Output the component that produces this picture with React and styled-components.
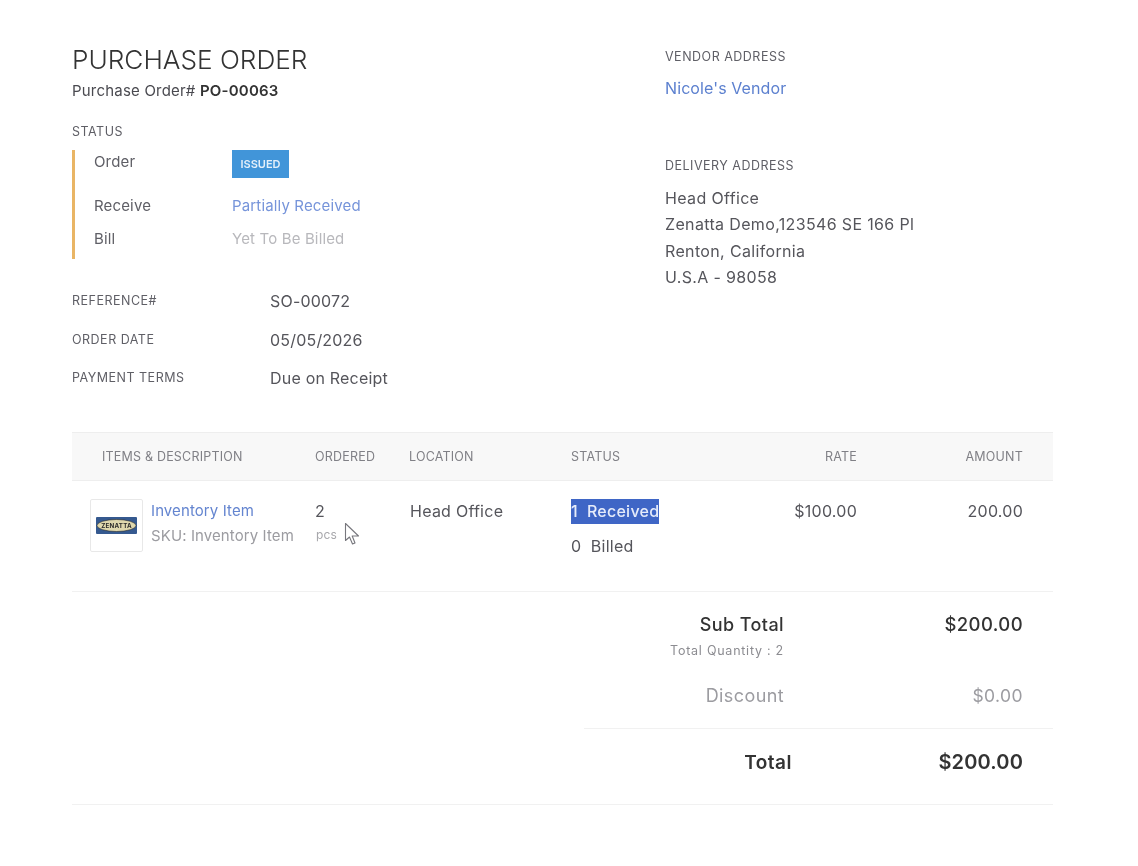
import React from 'react';
import styled, { createGlobalStyle } from 'styled-components';

const GlobalStyle = createGlobalStyle`
	html, body {
		margin: 0;
		padding: 0;
		background: #fff;
	}
	body {
		font-family: Inter, "Liberation Sans", sans-serif;
		color: #3a3a3f;
	}
`;

const Page = styled.div`
	width: 1138px;
	height: 866px;
	box-sizing: border-box;
	padding: 45px 85px 0 72px;
	overflow: hidden;
	filter: blur(0.35px);
`;

const Header = styled.div`
	display: flex;
	height: 387px;
`;

const LeftColumn = styled.div`
	width: 593px;
`;

const RightColumn = styled.div`
	padding-top: 5px;
`;

const Title = styled.div`
	font-size: 26.2px;
	line-height: 30px;
	font-weight: 300;
	color: #333;
`;

const PoNumber = styled.div`
	font-size: 15px;
	line-height: 16px;
	letter-spacing: 0.2px;
	margin-top: 8px;
	color: #4a4a50;
	b {
		font-weight: 600;
		color: #333;
	}
`;

const SmallLabel = styled.div`
	font-size: 12.5px;
	line-height: 14px;
	letter-spacing: 0.5px;
	color: #5f5f66;
	text-transform: uppercase;
`;

const StatusLabel = styled(SmallLabel)`
	margin-top: 26px;
`;

const StatusBox = styled.div`
	margin-top: 11px;
	border-left: 3px solid #e9b565;
	height: 109px;
	padding-left: 19px;
	box-sizing: border-box;
	display: grid;
	grid-template-columns: 138px 1fr;
	grid-template-rows: 34px 44px 22px;
	font-size: 15px;
	letter-spacing: 0.15px;
	align-items: center;
	color: #5f5f66;
`;

const StatusKey = styled.div`
	align-self: ${(p) => p.$align || 'center'};
	line-height: 24px;
`;

const BadgeCell = styled.div`
	align-self: start;
`;

const Badge = styled.span`
	display: block;
	width: 57px;
	height: 28px;
	line-height: 28px;
	background: #4195d9;
	color: #e4f0fa;
	font-size: 11px;
	letter-spacing: 0;
	font-weight: 600;
	text-align: center;
`;

const StatusValue = styled.div`
	color: ${(p) => p.$color};
	line-height: 24px;
`;

const MetaRows = styled.div`
	margin-top: 23px;
`;

const MetaRow = styled.div`
	display: flex;
	align-items: center;
	height: 38.5px;
`;

const MetaKey = styled(SmallLabel)`
	width: 198px;
`;

const MetaValue = styled.div`
	font-size: 16px;
	letter-spacing: 0.2px;
	color: #55555b;
`;

const VendorLink = styled.div`
	margin-top: 12px;
	font-size: 16px;
	line-height: 24px;
	letter-spacing: 0.1px;
	color: #5c80cf;
`;

const DeliveryLabel = styled(SmallLabel)`
	margin-top: 59px;
`;

const AddressLines = styled.div`
	margin-top: 12px;
	font-size: 16px;
	line-height: 26.4px;
	letter-spacing: 0.35px;
	color: #55555b;
`;

const TableHead = styled.div`
	display: grid;
	grid-template-columns: 243px 94px 162px 1fr 120px 166px;
	align-items: center;
	height: 47px;
	background: #f8f8f8;
	border-top: 1px solid #eee;
	border-bottom: 1px solid #eee;
	padding-right: 30px;
	font-size: 12.5px;
	letter-spacing: 0.2px;
	color: #808086;
	text-transform: uppercase;
`;

const HeadCell = styled.div`
	text-align: ${(p) => (p.$right ? 'right' : 'left')};
	padding-left: ${(p) => (p.$first ? '30px' : '0')};
`;

const ItemRow = styled.div`
	display: grid;
	grid-template-columns: 243px 95px 161px 1fr 120px 166px;
	height: 110px;
	padding-right: 30px;
	border-bottom: 1px solid #f1f1f1;
	font-size: 16px;
	letter-spacing: 0.25px;
	color: #55555b;
`;

const ItemCell = styled.div`
	padding-top: 18px;
	text-align: ${(p) => (p.$right ? 'right' : 'left')};
	line-height: 24px;
`;

const ItemInfo = styled.div`
	display: flex;
	gap: 8px;
	padding: 18px 0 0 18px;
`;

const Thumb = styled.div`
	width: 51px;
	height: 51px;
	border: 1px solid #e8e8e8;
	border-radius: 2px;
	display: flex;
	align-items: center;
	justify-content: center;
	flex-shrink: 0;
`;

const ItemText = styled.div`
	white-space: nowrap;
	font-size: 15px;
	line-height: 25px;
	letter-spacing: 0.1px;
	margin-top: -1px;
`;

const ItemName = styled.div`
	color: #6485d0;
`;

const ItemSku = styled.div`
	color: #9c9ca1;
`;

const Unit = styled.div`
	display: flex;
	align-items: center;
	padding-left: 1px;
	font-size: 12px;
	letter-spacing: 0.2px;
	color: #a8a8ac;
	height: 24px;
	position: relative;
`;

const Cursor = styled.svg`
	position: absolute;
	left: 29px;
	top: -1px;
`;

const Selected = styled.div`
	width: 88px;
	height: 25px;
	line-height: 25px;
	background: #3f66c6;
	color: #e6ecfa;
	font-weight: 500;
	overflow: hidden;
	white-space: nowrap;
`;

const BilledLine = styled.div`
	margin-top: 10px;
	white-space: nowrap;
`;

const TotalsWrap = styled.div`
	border-bottom: 1px solid #f1f1f1;
	height: 212px;
`;

const Totals = styled.div`
	margin-left: 512px;
	border-bottom: 1px solid #f1f1f1;
`;

const TotalsRow = styled.div`
	display: flex;
	justify-content: flex-end;
	align-items: center;
	box-sizing: border-box;
	padding: ${(p) => p.$pad} 30px 0 0;
	height: ${(p) => p.$height};
	font-size: 18px;
	letter-spacing: 0.4px;
	font-weight: ${(p) => p.$weight || 400};
	color: ${(p) => p.$color || '#333'};
`;

const TotalsKey = styled.div`
	width: 200px;
	text-align: right;
`;

const TotalsValue = styled.div`
	width: 239px;
	text-align: right;
	font-size: ${(p) => p.$size || '18.5px'};
`;

const TotalQuantity = styled.div`
	margin-top: 8px;
	text-align: right;
	font-size: 12.5px;
	line-height: 14px;
	letter-spacing: 0.75px;
	color: #8c8c91;
	padding-right: 269px;
`;

const GrandRow = styled.div`
	display: flex;
	justify-content: flex-end;
	align-items: center;
	height: 66px;
	padding-right: 30px;
	font-size: 20px;
	letter-spacing: 0.15px;
	font-weight: 600;
	color: #333;
`;

const GrandKey = styled.div`
	font-size: 19px;
	letter-spacing: 0.5px;
`;

const GrandValue = styled.div`
	width: 231px;
	text-align: right;
`;

function ZenattaLogo() {
	return (
		<svg width="41" height="17" viewBox="0 0 41 17">
			<rect width="41" height="17" rx="1" fill="#35598f" />
			<ellipse cx="20.5" cy="8.5" rx="19.5" ry="6" fill="#dfd8ae" stroke="#2a2a2a" strokeWidth="0.6" />
			<text x="20.5" y="10.7" fontSize="6.2" fontWeight="700" textAnchor="middle" fill="#2b2b2b" fontFamily="Inter, sans-serif">
				ZENATTA
			</text>
		</svg>
	);
}

function ArrowCursor() {
	return (
		<Cursor width="17" height="24" viewBox="0 0 17 24">
			<path d="M1.5 1.5 L1.5 18.5 L5.5 15 L8.5 22 L11 21 L8.2 14 L14.5 14 Z" fill="#fff" stroke="#77777d" strokeWidth="1.1" strokeLinejoin="round" />
		</Cursor>
	);
}

export default function App() {
	return (
		<Page>
			<GlobalStyle />
			<Header>
				<LeftColumn>
					<Title>PURCHASE ORDER</Title>
					<PoNumber>
						Purchase Order# <b>PO-00063</b>
					</PoNumber>
					<StatusLabel>Status</StatusLabel>
					<StatusBox>
						<StatusKey $align="start">Order</StatusKey>
						<BadgeCell>
							<Badge>ISSUED</Badge>
						</BadgeCell>
						<StatusKey>Receive</StatusKey>
						<StatusValue $color="#7694da">Partially Received</StatusValue>
						<StatusKey>Bill</StatusKey>
						<StatusValue $color="#b8b8bc">Yet To Be Billed</StatusValue>
					</StatusBox>
					<MetaRows>
						<MetaRow>
							<MetaKey>Reference#</MetaKey>
							<MetaValue>SO-00072</MetaValue>
						</MetaRow>
						<MetaRow>
							<MetaKey>Order Date</MetaKey>
							<MetaValue>05/05/2026</MetaValue>
						</MetaRow>
						<MetaRow>
							<MetaKey>Payment Terms</MetaKey>
							<MetaValue>Due on Receipt</MetaValue>
						</MetaRow>
					</MetaRows>
				</LeftColumn>
				<RightColumn>
					<SmallLabel>Vendor Address</SmallLabel>
					<VendorLink>Nicole's Vendor</VendorLink>
					<DeliveryLabel>Delivery Address</DeliveryLabel>
					<AddressLines>
						<div>Head Office</div>
						<div>Zenatta Demo,123546 SE 166 Pl</div>
						<div>Renton, California</div>
						<div>U.S.A - 98058</div>
					</AddressLines>
				</RightColumn>
			</Header>
			<TableHead>
				<HeadCell $first>Items &amp; Description</HeadCell>
				<HeadCell>Ordered</HeadCell>
				<HeadCell>Location</HeadCell>
				<HeadCell>Status</HeadCell>
				<HeadCell $right>Rate</HeadCell>
				<HeadCell $right>Amount</HeadCell>
			</TableHead>
			<ItemRow>
				<ItemInfo>
					<Thumb>
						<ZenattaLogo />
					</Thumb>
					<ItemText>
						<ItemName>Inventory Item</ItemName>
						<ItemSku>SKU: Inventory Item</ItemSku>
					</ItemText>
				</ItemInfo>
				<ItemCell>
					<div>2</div>
					<Unit>
						pcs
						<ArrowCursor />
					</Unit>
				</ItemCell>
				<ItemCell>Head Office</ItemCell>
				<ItemCell>
					<Selected>1&nbsp; Received</Selected>
					<BilledLine>0&nbsp; Billed</BilledLine>
				</ItemCell>
				<ItemCell $right>$100.00</ItemCell>
				<ItemCell $right>200.00</ItemCell>
			</ItemRow>
			<TotalsWrap>
				<Totals>
					<TotalsRow $height="44px" $pad="20px" $weight={500}>
						<TotalsKey>Sub Total</TotalsKey>
						<TotalsValue>$200.00</TotalsValue>
					</TotalsRow>
					<TotalQuantity>Total Quantity : 2</TotalQuantity>
					<TotalsRow $height="70px" $pad="4px" $color="#9c9ca1">
						<TotalsKey>Discount</TotalsKey>
						<TotalsValue $size="17.5px">$0.00</TotalsValue>
					</TotalsRow>
				</Totals>
				<GrandRow>
					<GrandKey>Total</GrandKey>
					<GrandValue>$200.00</GrandValue>
				</GrandRow>
			</TotalsWrap>
		</Page>
	);
}
